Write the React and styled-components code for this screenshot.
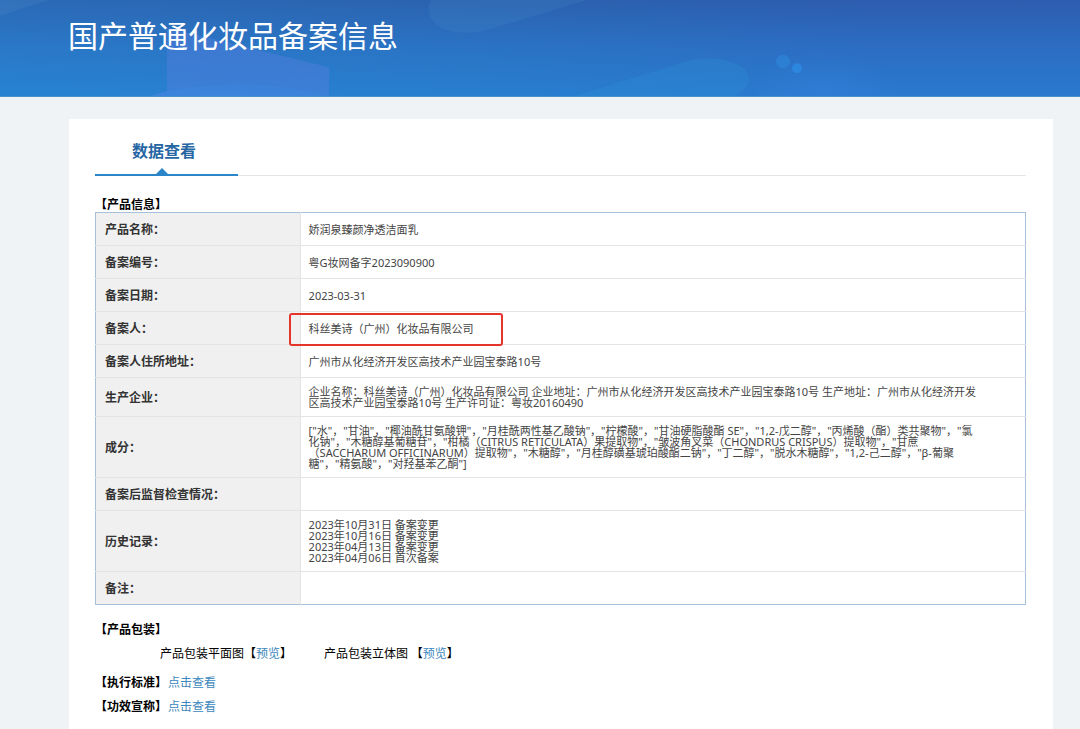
import React from 'react'
import styled, { createGlobalStyle } from 'styled-components'

const theme = {
  font: '"Noto Sans", "Noto Sans CJK SC", sans-serif',
  cjk: '"Noto Sans CJK SC", sans-serif',
  colors: {
    page: '#eff3f6',
    text: '#444444',
    label: '#333333',
    tab: '#2566a3',
    line: '#2b86c9',
    link: '#3c87bd',
    tableBorder: '#a6bfda',
    cellBorder: '#e4e4e4',
    labelBg: '#f0f0f0',
    mark: '#e5352b',
  },
}

const GlobalStyle = createGlobalStyle`
  * {
    box-sizing: border-box;
  }

  body {
    margin: 0;
    background: ${theme.colors.page};
    font-family: ${theme.font};
    font-size: 12px;
    color: #000;
  }
`

const Page = styled.div`
  display: flex;
  flex-direction: column;
  min-height: 100vh;
`

const Header = styled.header`
  position: relative;
  height: 97px;
  padding: 12px 68px 0;
  overflow: hidden;
  border-bottom: 1px solid #4a90cc;
  background:
    linear-gradient(90deg, rgba(38, 150, 220, 0.22), rgba(38, 140, 210, 0.1) 45%, rgba(50, 90, 200, 0.12) 80%),
    linear-gradient(180deg, #2c5dab 0%, #2b70c2 50%, #287dd0 100%);
`

const Decor = styled.svg`
  position: absolute;
  top: 0;
  left: 0;
  width: 100%;
  height: 100%;
`

const Title = styled.h1`
  position: relative;
  margin: 0;
  font-family: ${theme.cjk};
  font-size: 30px;
  font-weight: 400;
  line-height: 44px;
  color: #fff;
`

const Panel = styled.main`
  flex: 1;
  margin: 22px 27px 0 69px;
  padding: 15px 27px 16px 26px;
  background: #fff;
`

const Tabs = styled.nav`
  display: flex;
  border-bottom: 1px solid ${theme.colors.cellBorder};
`

const Tab = styled.button`
  position: relative;
  margin-bottom: -1px;
  padding: 0 42px 8px 37px;
  border: 0;
  border-bottom: 2px solid ${theme.colors.line};
  background: none;
  font-family: ${theme.cjk};
  font-size: 16px;
  font-weight: 700;
  line-height: 32px;
  color: ${theme.colors.tab};

  &::after {
    content: '';
    position: absolute;
    left: 61px;
    bottom: 0;
    border: 6px solid transparent;
    border-top: 0;
    border-bottom-color: ${theme.colors.line};
  }
`

const Heading = styled.h2`
  margin: 0;
  font-family: ${theme.cjk};
  font-size: 12px;
  font-weight: 700;
  line-height: 16px;
`

const Info = styled.section`
  padding-top: 20px;
`

const Table = styled.table`
  width: 100%;
  table-layout: fixed;
  border-collapse: collapse;
  border: 1px solid ${theme.colors.tableBorder};

  tr + tr > * {
    border-top: 1px solid ${theme.colors.cellBorder};
  }
`

const Label = styled.th`
  width: 22%;
  height: 33px;
  padding: 0 9px;
  border-right: 1px solid ${theme.colors.cellBorder};
  background: ${theme.colors.labelBg};
  font-family: ${theme.cjk};
  font-size: 12px;
  line-height: 16px;
  text-align: left;
  color: ${theme.colors.label};
`

const Value = styled.td`
  padding: 8px 44px 8px 8px;
  font-size: 11px;
  line-height: 11px;
  white-space: pre-line;
  color: ${theme.colors.text};
`

const Marked = styled.span`
  position: relative;
  display: inline-block;

  &::after {
    content: '';
    position: absolute;
    inset: -10px -29px -12px -20px;
    border: 2px solid ${theme.colors.mark};
    border-radius: 3px;
  }
`

const Packaging = styled.section`
  padding-top: 16px;
`

const Previews = styled.div`
  display: flex;
  gap: 32px;
  padding: 8px 0 0 65px;
  font-family: ${theme.cjk};
  line-height: 16px;
`

const LinkRow = styled.section`
  display: flex;
  gap: 1px;
  padding-top: ${props => props.$first ? 13 : 8}px;
  line-height: 16px;
`

const Link = styled.a`
  font-family: ${theme.cjk};
  color: ${theme.colors.link};
  text-decoration: none;
`

const history = [
  '2023年10月31日 备案变更',
  '2023年10月16日 备案变更',
  '2023年04月13日 备案变更',
  '2023年04月06日 首次备案',
]

const rows = [
  { label: '产品名称', value: '娇润泉臻颜净透洁面乳' },
  { label: '备案编号', value: '粤G妆网备字2023090900' },
  { label: '备案日期', value: '2023-03-31' },
  { label: '备案人', value: <Marked>科丝美诗（广州）化妆品有限公司</Marked> },
  { label: '备案人住所地址', value: '广州市从化经济开发区高技术产业园宝泰路10号' },
  {
    label: '生产企业',
    value: '企业名称：科丝美诗（广州）化妆品有限公司 企业地址：广州市从化经济开发区高技术产业园宝泰路10号 生产地址：广州市从化经济开发区高技术产业园宝泰路10号 生产许可证：粤妆20160490',
  },
  {
    label: '成分',
    value: '["水"，"甘油"，"椰油酰甘氨酸钾"，"月桂酰两性基乙酸钠"，"柠檬酸"，"甘油硬脂酸酯 SE"，"1,2-戊二醇"，"丙烯酸（酯）类共聚物"，"氯化钠"，"木糖醇基葡糖苷"，"柑橘（CITRUS RETICULATA）果提取物"，"皱波角叉菜（CHONDRUS CRISPUS）提取物"，"甘蔗（SACCHARUM OFFICINARUM）提取物"，"木糖醇"，"月桂醇磺基琥珀酸酯二钠"，"丁二醇"，"脱水木糖醇"，"1,2-己二醇"，"β-葡聚糖"，"精氨酸"，"对羟基苯乙酮"]',
  },
  { label: '备案后监督检查情况', value: '' },
  { label: '历史记录', value: history.join('\n') },
  { label: '备注', value: '' },
]

export default function App() {
  return (
    <Page lang="zh-CN">
      <GlobalStyle />
      <Header>
        <Decor viewBox="0 0 1080 97" preserveAspectRatio="none" aria-hidden="true">
          <defs>
            <radialGradient id="glow">
              <stop offset="0" stopColor="#3a86e4" stopOpacity="0.3" />
              <stop offset="1" stopColor="#3a86e4" stopOpacity="0" />
            </radialGradient>
          </defs>
          <path d="M0 0H48L0 16Z" fill="#5a8fd0" opacity="0.2" />
          <path d="M167 28L329 68V97H150L167 92Z" fill="#5a80e0" opacity="0.4" />
          <path d="M167 92Q250 76 329 97H150Z" fill="#3a8ae6" opacity="0.25" />
          <path d="M431 0C424 12 432 33 465 33C480 33 492 29 505 25L587 0Z" fill="#4f94d2" opacity="0.16" />
          <path d="M575 97L690 61C720 54 750 66 749 80C748 88 742 93 735 97Z" fill="#2f93d8" opacity="0.25" />
          <ellipse cx="825" cy="94" rx="75" ry="42" fill="url(#glow)" />
          <circle cx="783" cy="62" r="7" fill="#2d8be0" opacity="0.5" />
          <circle cx="797" cy="69" r="5" fill="#2b93ea" opacity="0.6" />
        </Decor>
        <Title>国产普通化妆品备案信息</Title>
      </Header>

      <Panel>
        <Tabs>
          <Tab type="button">数据查看</Tab>
        </Tabs>

        <Info>
          <Heading>【产品信息】</Heading>
          <Table>
            <tbody>
              {rows.map(row => (
                <tr key={row.label}>
                  <Label scope="row">{row.label}：</Label>
                  <Value>{row.value}</Value>
                </tr>
              ))}
            </tbody>
          </Table>
        </Info>

        <Packaging>
          <Heading>【产品包装】</Heading>
          <Previews>
            <span>产品包装平面图【<Link href="#flat">预览</Link>】</span>
            <span>产品包装立体图 【<Link href="#solid">预览</Link>】</span>
          </Previews>
        </Packaging>

        <LinkRow $first>
          <Heading>【执行标准】</Heading>
          <Link href="#standard">点击查看</Link>
        </LinkRow>
        <LinkRow>
          <Heading>【功效宣称】</Heading>
          <Link href="#efficacy">点击查看</Link>
        </LinkRow>
      </Panel>
    </Page>
  )
}
